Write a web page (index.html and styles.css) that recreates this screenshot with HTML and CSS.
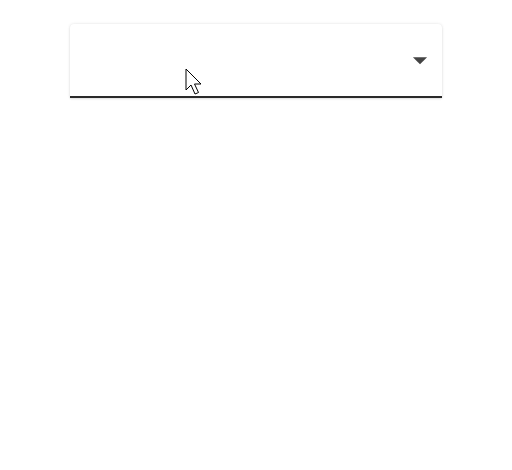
FILE: index.html
```html
<!DOCTYPE html>
<html>
<head>
<meta charset="utf-8">
<link rel="stylesheet" href="styles.css">
</head>
<body>
<div class="page">
  <div class="select">
    <div class="value"></div>
    <svg class="arrow" viewBox="0 0 24 24" width="34" height="34"><path d="M7 10l5 5 5-5z" fill="#444"/></svg>
  </div>
  <svg class="cursor" width="20" height="28" viewBox="0 0 20 28"><path d="M1 1 L1 22 L6 17 L10 26 L13.5 24.5 L9.5 16 L16 16 Z" fill="#fff" stroke="#000" stroke-width="1" stroke-linejoin="miter"/></svg>
</div>
</body>
</html>
```
FILE: styles.css
```css
html, body { margin: 0; padding: 0; background: #fff; }
body { font-family: Roboto, "Liberation Sans", sans-serif; }
.page { position: relative; width: 512px; height: 470px; padding-top: 24px; box-sizing: border-box; }
.select {
  width: 372px;
  height: 74px;
  margin: 0 auto;
  box-sizing: border-box;
  background: #fff;
  border-radius: 4px 4px 0 0;
  border-bottom: 2px solid #2a2a2a;
  box-shadow: 0 0 3px rgba(0,0,0,0.12), 0 1px 2px rgba(0,0,0,0.08);
  display: flex;
  align-items: center;
  justify-content: space-between;
  padding: 0 5px 0 12px;
}
.arrow { display: block; }
.cursor { position: absolute; left: 185px; top: 68px; }
```
